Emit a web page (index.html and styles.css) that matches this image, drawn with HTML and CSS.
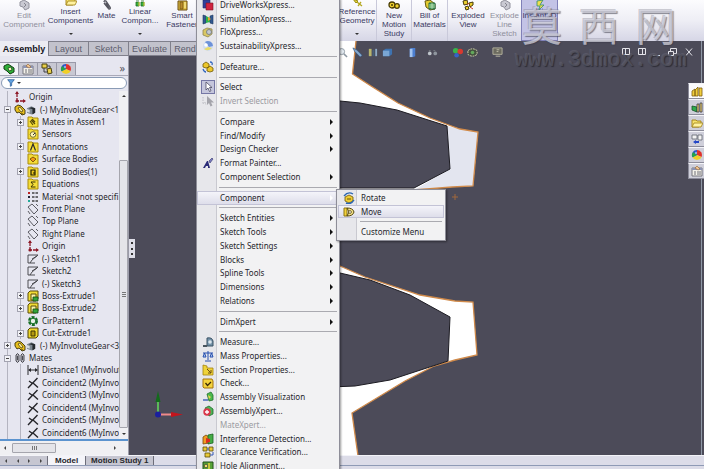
FILE: index.html
```
<!DOCTYPE html>
<html lang="en">
  <head>
    <meta charset="utf-8" />
    <title>Assembly</title>
    <meta name="viewport" content="width=device-width, initial-scale=1.0" />
    <link rel="stylesheet" href="styles.css">
  </head>
  <body>
    <!-- shared icons -->
    <svg class="sprite" aria-hidden="true">
      <symbol id="i-part" viewBox="0 0 12 12"><path d="M1 3l3-2 3 1 4 4v4l-3 1-3-3-2 1-2-3z" fill="#e8bf1d" stroke="#3b3208" stroke-width=".9" /><path d="M4 4l2-1 3 4-2 1zM7 9l2 1" fill="#fff3a0" stroke="#3b3208" stroke-width=".7" /></symbol>
      <symbol id="i-green-part" viewBox="0 0 12 12"><path d="M1 3l4-2 6 4v4l-4 2-3-3-3-2z" fill="#2fae38" stroke="#123d14" /><path d="M5 5l3-1 1 3-3 1z" fill="#f6f6c0" stroke="#123d14" stroke-width=".7" /></symbol>
      <symbol id="i-gray-part" viewBox="0 0 12 12"><path d="M2 3l4-2 5 3v5l-4 2-2-3-3-1z" fill="#c9c9d2" stroke="#92929d" /><path d="M6 4l2 2-2 2" fill="none" stroke="#85858f" /></symbol>
      <symbol id="i-cube" viewBox="0 0 12 12"><path d="M1 4l5-2 4 2v5l-4 2-5-2z" fill="#7d8791" /><path d="M3 4l4 1v6l3-2V4L6 3z" fill="#25292e" /><path d="M1 5l3 1v3L1 8z" fill="#d7dde2" /></symbol>
      <symbol id="i-origin" viewBox="0 0 12 12"><path d="M3 1v9h8" fill="none" stroke="#8e1a28" stroke-width="1.3" stroke-dasharray="5 1" /><path d="M1 3l2-3 2 3zM9 8l3 2-3 2z" fill="#8e1a28" /><circle cx="3" cy="10" r="1.6" fill="#8e1a28" /></symbol>
      <symbol id="i-folder" viewBox="0 0 12 12"><path d="M1 1h4l1 1h5v9H1z" fill="#f4dd38" stroke="#a98b0c" /></symbol>
      <symbol id="i-mates" viewBox="0 0 12 12"><use href="#i-folder" /><path d="M4 4l4 4M5 3l3 3M3 5l3 4" stroke="#54480a" stroke-width="1.2" /></symbol>
      <symbol id="i-sensor" viewBox="0 0 12 12"><use href="#i-folder" /><circle cx="6" cy="6.5" r="2.8" fill="#fff6b2" stroke="#57512c" stroke-width=".8" /><path d="M6 7l2-2" stroke="#333" /></symbol>
      <symbol id="i-note" viewBox="0 0 12 12"><use href="#i-folder" /><path d="M3.500 9.500L6 3l2.500 6.500" fill="none" stroke="#2c2c2c" stroke-width="1.200" /></symbol>
      <symbol id="i-surface" viewBox="0 0 12 12"><use href="#i-folder" /><path d="M3 6l3-2 3 2-3 3z" fill="#f39b18" stroke="#6a3e04" stroke-width=".8" /></symbol>
      <symbol id="i-solid" viewBox="0 0 12 12"><use href="#i-folder" /><path d="M4 4h4v5H4z" fill="#e9c51e" stroke="#211d04" stroke-width="1.200" /><path d="M6 7h2" stroke="#211d04" /></symbol>
      <symbol id="i-sigma" viewBox="0 0 12 12"><use href="#i-folder" /><path d="M8.500 4H4l2 2.500L4 9h4.500" fill="none" stroke="#3a3206" /></symbol>
      <symbol id="i-material" viewBox="0 0 12 12"><path d="M5 2h6M5 6h6M5 10h6" stroke="#444" stroke-width="1.300" stroke-dasharray="2.500 1" /><path d="M1 1h2v2H1z" fill="#b22" /><path d="M1 5h2v2H1z" fill="#223" /><path d="M1 9h2v2H1z" fill="#2a9" /></symbol>
      <symbol id="i-plane" viewBox="0 0 12 12"><path d="M1 4l4-3 6 6-4 4zM1 8l2 3M9 1l2 2" fill="none" stroke="#4c4c52" stroke-width=".9" /></symbol>
      <symbol id="i-sketch" viewBox="0 0 12 12"><path d="M1 2h10L5 7 3 10H1zM3 10h5M5 6l5-3" fill="none" stroke="#3d3d42" stroke-width=".9" /></symbol>
      <symbol id="i-extrude" viewBox="0 0 12 12"><path d="M1 3l2-2h8v8l-2 2H1z" fill="#f1dc35" stroke="#5b4d08" /><path d="M4 4h5v6H4z" fill="#f8f3a9" stroke="#5b4d08" /><path d="M6 7h5v4H6z" fill="#34a43a" stroke="#114915" stroke-width=".8" /></symbol>
      <symbol id="i-cut" viewBox="0 0 12 12"><path d="M1 3l2-2h8v8l-2 2H1z" fill="#efd82c" stroke="#4f4306" /><path d="M4 4h4v5H4z" fill="#b59a10" stroke="#3e3403" /></symbol>
      <symbol id="i-pattern" viewBox="0 0 12 12"><circle cx="6" cy="6" r="3.500" fill="none" stroke="#176f27" stroke-width="3" stroke-dasharray="2.700 1" /><circle cx="6" cy="6" r="2.800" fill="#e8f0e8" stroke="#176f27" /></symbol>
      <symbol id="i-clips" viewBox="0 0 12 12"><path d="M2 3q1.500-3 3 0v6q-1.500 3-3 0zM7 3q1.500-3 3 0v6q-1.500 3-3 0zM3.500 4v4M8.500 4v4" fill="#b8b8c0" stroke="#4c4c54" /></symbol>
      <symbol id="i-distance" viewBox="0 0 12 12"><path d="M1 1v10M11 1v10M2 6h8" stroke="#2a2a2e" fill="none" /><path d="M1 6l3-2v4zM11 6L8 4v4z" fill="#2a2a2e" /></symbol>
      <symbol id="i-coincident" viewBox="0 0 12 12"><path d="M10.500 1L1 11M6 6l5 4.500M2 4l3.500 2.500" fill="none" stroke="#25252a" stroke-width="1.400" /></symbol>
      <symbol id="i-props" viewBox="0 0 12 12"><path d="M1 3h10v8H1z" fill="#f3f1ea" stroke="#77777f" /><path d="M1 3h10v2H1z" fill="#8c93b4" /><path d="M3 7h2M6 7h4M3 9h2M6 9h4" stroke="#6f6f77" /><path d="M6 1l3 3-2 1-3-2z" fill="#f1c592" stroke="#8d6233" stroke-width=".600" /></symbol>
      <symbol id="i-config" viewBox="0 0 12 12"><path d="M1 1h5v4H1zM6 6l4-1 1 5-4 1z" fill="#ead04a" stroke="#4b420f" /><path d="M3 5v4h3M6 3h3v2" fill="none" stroke="#3f3f45" /></symbol>
      <symbol id="i-wheel" viewBox="0 0 12 12"><path d="M6 6V1a5 5 0 0 1 4.500 7z" fill="#e0312b" /><path d="M6 6l4.500 2.300A5 5 0 0 1 1.500 8.300z" fill="#f0cf28" /><path d="M6 6L1.500 8.300A5 5 0 0 1 6 1z" fill="#2b53c9" /><path d="M6 6L2 3a5 5 0 0 0-.5 5.300z" fill="#26a447" /><circle cx="5" cy="4" r="1.200" fill="#fff" opacity=".5" /></symbol>
      <symbol id="i-clip" viewBox="0 0 12 12"><path d="M3 3q0-2 2-1l4 6q1 2-1 2l-1-1-4-5M5 4l3 5" fill="#bcbcc4" stroke="#55555e" stroke-width="1.300" /></symbol>
      <symbol id="i-linear" viewBox="0 0 12 12"><path d="M2 2h3v3H2zM7 2h3v3H7zM2 7h3v4H2zM7 7h3v4H7z" fill="#39b13f" stroke="#1c6b22" stroke-width=".8" /><path d="M5 7v4M10 7v4" stroke="#e6cf3b" /></symbol>
      <symbol id="i-ruler" viewBox="0 0 12 12"><path d="M3 2l6-1-3 5h4l-5 5 1-4H3z" fill="#f0e04c" stroke="#2d8d6c" stroke-width=".8" /><path d="M2 10h8" stroke="#5a7fd0" stroke-dasharray="1 1" /></symbol>
      <symbol id="i-geom" viewBox="0 0 12 12"><path d="M2 4l5 2-2 2z" fill="#eede3a" stroke="#958612" /><path d="M6 7l5 4M7 11l3-4" stroke="#b5a821" stroke-width="1.300" /></symbol>
      <symbol id="i-gears" viewBox="0 0 12 12"><circle cx="4" cy="6" r="3" fill="#f0d12f" stroke="#473b04" stroke-width="1.300" /><circle cx="9" cy="7" r="2.300" fill="#f0d12f" stroke="#473b04" stroke-width="1.300" /><circle cx="4" cy="6" r="1" fill="#473b04" /></symbol>
      <symbol id="i-bom" viewBox="0 0 12 12"><path d="M1 2l5-1 5 4v5l-5 1-4-3z" fill="#e2cb2f" stroke="#665810" /><path d="M5 4h6v6H5z" fill="#55a85b" stroke="#256b46" /><path d="M5 6h6M5 8h6M8 4v6" stroke="#e1efe1" stroke-width=".6" /></symbol>
      <symbol id="i-smart" viewBox="0 0 12 12"><path d="M2 2h9v9H2z" fill="#e5c243" stroke="#6b4d13" /><path d="M4 3h3v7H4z" fill="#b98a2c" stroke="#6b4d13" stroke-width=".7" /><path d="M8 4h2M8 6h2M8 8h2" stroke="#fbf0ae" /></symbol>
      <symbol id="i-explode" viewBox="0 0 12 12"><path d="M1 2l4-1 1 4-4 1zM7 4l4-1v3L8 8zM3 8l3-1 1 3-3 1z" fill="#eccf2f" stroke="#463b08" /><path d="M5 6l2-2M8 8l3 2" stroke="#c63a25" /></symbol>
      <symbol id="i-pages" viewBox="0 0 12 12"><path d="M1 1h7v8H1z" fill="#2f3f9d" stroke="#222b66" stroke-width=".6" /><path d="M4 4h7v7H4z" fill="#cf2440" stroke="#7c1424" stroke-width=".6" /></symbol>
      <symbol id="i-sim" viewBox="0 0 12 12"><path d="M1 2l3 1v7l-3 1zM11 2L8 3v7l3 1z" fill="#315990" stroke="#203b5f" stroke-width=".6" /><path d="M4 3l4 2v4l-4 1z" fill="#2fb24b" /><path d="M6 4l3 2-3 2z" fill="#f0a12a" /></symbol>
      <symbol id="i-flo" viewBox="0 0 12 12"><path d="M1 4l4-2 5 1v5l-4 3-5-2z" fill="#d9c764" stroke="#8f8652" stroke-width=".8" /><circle cx="7" cy="6" r="2.500" fill="#c4c9cf" stroke="#6c7580" stroke-width=".8" /></symbol>
      <symbol id="i-sustain" viewBox="0 0 12 12"><circle cx="6" cy="6" r="5" fill="#cfdcf1" /><path d="M3 2a5 5 0 0 1 8 4L7 7z" fill="#6d92d8" /><path d="M2 9q4 3 8-1L6 7z" fill="#e9dc68" /><circle cx="4" cy="5" r="1.800" fill="#fff" /></symbol>
      <symbol id="i-defeature" viewBox="0 0 12 12"><path d="M1 3l3-2 3 2v3L4 7 1 6zM5 7l3-2 3 2v3l-3 1-3-1z" fill="#ecc62a" stroke="#725c08" stroke-width=".8" /><path d="M8 1q3 0 2 3M1 8q1 3 3 3" fill="none" stroke="#3166be" stroke-width="1.300" /></symbol>
      <symbol id="i-cursor" viewBox="0 0 12 12"><path d="M4 1v8l2-2 1.500 3.500 1.500-.7L7.500 6.500H10z" fill="#fff" stroke="#4a4a63" stroke-width=".8" /></symbol>
      <symbol id="i-invert" viewBox="0 0 12 12"><path d="M5 1v9l2-2 1.500 3.500 2-1L9 7.500h3z" fill="#a4a4ab" /><path d="M1 2v7l2-2 1 3" fill="none" stroke="#bdbdc4" stroke-dasharray="1.500 1" /></symbol>
      <symbol id="i-painter" viewBox="0 0 12 12"><path d="M1 11L5 4h1l2 7H6V9H4l-1 2z" fill="#2b2c78" /><path d="M7 4l3-3 1 1-3 4z" fill="#7a7cc0" stroke="#33346a" stroke-width=".6" /></symbol>
      <symbol id="i-measure" viewBox="0 0 12 12"><path d="M5 2q5-1 6 3v5H5z" fill="#7391a8" stroke="#3a5265" /><circle cx="8" cy="6" r="1.800" fill="#dbe5ec" /><path d="M1 9h4v2H1z" fill="#48545e" /></symbol>
      <symbol id="i-scale" viewBox="0 0 12 12"><path d="M6 1v9M3 11h6M1 3h10M2.500 3L1 7h3zM9.500 3L8 7h3z" fill="#b9cff2" stroke="#264fae" /></symbol>
      <symbol id="i-section" viewBox="0 0 12 12"><path d="M1 1l4 1v2h6v7H1z" fill="#efd33a" stroke="#a4840d" stroke-width=".8" /><path d="M5 5l4 4M9 6v3H6" fill="none" stroke="#6b4a12" /></symbol>
      <symbol id="i-check" viewBox="0 0 12 12"><path d="M1 2h9l1 2v7H2l-1-1z" fill="#f4d33d" stroke="#a5740d" /><path d="M3.500 6l2 2.500L9 5" fill="none" stroke="#3b2a05" stroke-width="1.300" /></symbol>
      <symbol id="i-visual" viewBox="0 0 12 12"><path d="M5 3l4-2 2 3v5l-4 1z" fill="#4bb94e" stroke="#22702a" stroke-width=".8" /><path d="M1 8h5v2H1z" fill="#6c86c4" /><path d="M6 4l3 2-2 2z" fill="#efd24a" /></symbol>
      <symbol id="i-asmx" viewBox="0 0 12 12"><path d="M3 3l4-2 4 3v5l-4 2z" fill="#4fb456" stroke="#1f6b2b" stroke-width=".8" /><circle cx="5" cy="7" r="3.700" fill="#d9364a" /><path d="M5 5v4M3 7h4" stroke="#fff" stroke-width="1.300" /></symbol>
      <symbol id="i-interf" viewBox="0 0 12 12"><path d="M1 4l3-2 3 2v6l-6 1z" fill="#f09c22" stroke="#7c4608" stroke-width=".8" /><path d="M6 2l5-1v9l-5 1z" fill="#44ac45" stroke="#1a6322" stroke-width=".8" /><path d="M4 5l4 1v3l-4 1z" fill="#dc2c22" /></symbol>
      <symbol id="i-clear" viewBox="0 0 12 12"><path d="M1 1h4v4H1zM7 1h4v4H7zM3 7h5v4H3z" fill="#e8c836" stroke="#5c4b0a" stroke-width=".8" /><path d="M5 3h2M8 9h3V6" fill="none" stroke="#3459b3" /></symbol>
      <symbol id="i-hole" viewBox="0 0 12 12"><path d="M1 2h10v9H1z" fill="#58a337" stroke="#22511a" /><circle cx="4" cy="6" r="1.800" fill="#f2e06a" stroke="#333" stroke-width=".7" /><path d="M7 3v7" stroke="#e9d23a" stroke-width="1.500" /></symbol>
      <symbol id="i-rotate" viewBox="0 0 12 12"><path d="M2 5l4-2 4 2v4l-4 2-4-2z" fill="#f0cd31" stroke="#6a560a" stroke-width=".8" /><path d="M1 4q4-5 9-2M11 8q-3 5-8 3" fill="none" stroke="#2b66b2" stroke-width="1.400" /><path d="M4 7h4" stroke="#6a560a" /></symbol>
      <symbol id="i-move" viewBox="0 0 12 12"><path d="M1 2h3v8H1z" fill="#f2d23c" stroke="#8d7411" /><path d="M4 2q6 0 7 4-1 4-7 4l2-4z" fill="#f6e58d" stroke="#544509" /><circle cx="7" cy="6" r="1.400" fill="#fff" stroke="#544509" stroke-width=".8" /></symbol>
      <symbol id="i-home" viewBox="0 0 12 12"><path d="M1 6l3-2v7H1zM4 5l3-3v9H4zM8 3h3v8H8z" fill="#f0ce3e" stroke="#7d5d0d" stroke-width=".8" /></symbol>
      <symbol id="i-library" viewBox="0 0 12 12"><path d="M1 5l5 1v5L1 9z" fill="#2ea94b" stroke="#155425" stroke-width=".8" /><path d="M6 3h2v8H6zM9 2h2v9H9z" fill="#efd36c" stroke="#3b3b4d" stroke-width=".8" /></symbol>
      <symbol id="i-open" viewBox="0 0 12 12"><path d="M1 3h4l1 1h4v2L8 10H1z" fill="#f6e26c" stroke="#a08015" stroke-width=".9" /><path d="M1 10l2-4h9l-2 4z" fill="#fff2a0" stroke="#a08015" stroke-width=".8" /></symbol>
      <symbol id="i-palette" viewBox="0 0 12 12"><path d="M1 2h5v4H1zM7 2h4v5H7z" fill="#f2f2f2" stroke="#5f6570" stroke-width=".8" /><path d="M2 9l3-2v1h3v2H5v1z" fill="#2346c7" /></symbol>
      <symbol id="i-funnel" viewBox="0 0 12 12"><path d="M1 1h10L7 6v4l-2 1V6z" fill="#63a5e4" stroke="#1d4f8d" /></symbol>
      <symbol id="i-lens" viewBox="0 0 12 12"><circle cx="5" cy="5" r="3.300" fill="#e5ecf2" stroke="#8d98a2" /><path d="M7.500 7.500L11 11" stroke="#8d98a2" stroke-width="1.600" /></symbol>
      <symbol id="i-pen" viewBox="0 0 12 12"><path d="M1 1l4 2 6 6-2 2-6-6z" fill="#86a9cf" stroke="#31557e" stroke-width=".7" /></symbol>
      <symbol id="i-cutview" viewBox="0 0 12 12"><path d="M2 2h3v8H2z" fill="#b8b56e" /><path d="M6 3h2v7H6z" fill="#47607a" /><path d="M9 2h2v8H9z" fill="#8fabc5" /></symbol>
      <symbol id="i-box" viewBox="0 0 12 12"><path d="M1 4l3-2h7v6l-3 2H1z" fill="#3e73b1" /><path d="M1 4h7v6H1z" fill="#7aa6d4" /></symbol>
      <symbol id="i-can" viewBox="0 0 12 12"><path d="M3 2l2-1h4v9l-2 1H3z" fill="#4b7ed0" /><path d="M3 2h3v9H3z" fill="#a2c3ef" /></symbol>
      <symbol id="i-glasses" viewBox="0 0 12 12"><circle cx="3" cy="7" r="2" fill="#bfc5cb" /><circle cx="9" cy="7" r="2" fill="#8f969e" /><path d="M2 4h2M7 4h2" stroke="#7b8188" /></symbol>
      <symbol id="i-rgb" viewBox="0 0 12 12"><circle cx="4" cy="4" r="3" fill="#38b449" /><circle cx="9" cy="5" r="3" fill="#d9392f" /><circle cx="5" cy="9" r="2.500" fill="#3563c8" /></symbol>
      <symbol id="i-scene" viewBox="0 0 12 12"><path d="M1 4q5-4 10 0v4q-5 4-10 0z" fill="#45513f" stroke="#dfe0b6" stroke-dasharray="2 1" /><circle cx="6" cy="6" r="2" fill="#63a95c" /></symbol>
      <symbol id="i-monitor" viewBox="0 0 12 12"><path d="M1 1h10v7H1z" fill="#6b6a5f" stroke="#b6b39f" /><path d="M4 10h5M5 3h3M5 5h2" stroke="#c2bfab" /></symbol>
    </svg>

    <header class="ribbon">
      <button class="tool w-edit off"><svg><use href="#i-gray-part" /></svg>Edit<br>Component</button>
      <button class="tool w-insert drop"><svg><use href="#i-open" /></svg>Insert<br>Components</button>
      <button class="tool w-mate"><svg><use href="#i-clip" /></svg>Mate</button>
      <button class="tool w-linear drop"><svg><use href="#i-linear" /></svg>Linear<br>Compon...</button>
      <button class="tool w-smart"><svg><use href="#i-smart" /></svg>Smart<br>Fastener</button>
      <div class="tool-space"></div>
      <button class="tool w-ref drop"><svg><use href="#i-geom" /></svg>Reference<br>Geometry</button>
      <button class="tool w-motion"><svg><use href="#i-gears" /></svg>New<br>Motion<br>Study</button>
      <button class="tool w-bom"><svg><use href="#i-bom" /></svg>Bill of<br>Materials</button>
      <button class="tool w-view"><svg><use href="#i-explode" /></svg>Exploded<br>View</button>
      <button class="tool w-line off"><svg><use href="#i-gray-part" /></svg>Explode<br>Line<br>Sketch</button>
      <button class="tool w-instant active"><svg><use href="#i-ruler" /></svg>Instant3D</button>
    </header>

    <main class="workspace">
      <nav class="tabs">
        <button class="tab current">Assembly</button>
        <button class="tab">Layout</button>
        <button class="tab">Sketch</button>
        <button class="tab wide">Evaluate</button>
        <button class="tab last">Rend</button>
      </nav>

      <aside class="panel">
        <div class="panel-tabs">
          <button class="panel-tab current" aria-label="Feature tree"><svg><use href="#i-green-part" /></svg></button>
          <button class="panel-tab" aria-label="Properties"><svg><use href="#i-props" /></svg></button>
          <button class="panel-tab" aria-label="Configurations"><svg><use href="#i-config" /></svg></button>
          <button class="panel-tab" aria-label="Appearances"><svg><use href="#i-wheel" /></svg></button>
          <span class="more">»</span>
        </div>
        <label class="filter">
          <svg><use href="#i-funnel" /></svg><i class="caret"></i>
          <input type="text" aria-label="Filter" />
        </label>
        <div class="tree-box">
          <ul class="tree">
            <li class="l1"><svg><use href="#i-origin" /></svg>Origin</li>
            <li class="l1 minus"><svg><use href="#i-part" /></svg><svg><use href="#i-cube" /></svg>(-) MyInvoluteGear&lt;1</li>
            <li class="l2 plus"><svg><use href="#i-mates" /></svg>Mates in Assem1</li>
            <li class="l2"><svg><use href="#i-sensor" /></svg>Sensors</li>
            <li class="l2 plus"><svg><use href="#i-note" /></svg>Annotations</li>
            <li class="l2"><svg><use href="#i-surface" /></svg>Surface Bodies</li>
            <li class="l2 plus"><svg><use href="#i-solid" /></svg>Solid Bodies(1)</li>
            <li class="l2"><svg><use href="#i-sigma" /></svg>Equations</li>
            <li class="l2"><svg><use href="#i-material" /></svg>Material &lt;not specifi</li>
            <li class="l2"><svg><use href="#i-plane" /></svg>Front Plane</li>
            <li class="l2"><svg><use href="#i-plane" /></svg>Top Plane</li>
            <li class="l2"><svg><use href="#i-plane" /></svg>Right Plane</li>
            <li class="l2"><svg><use href="#i-origin" /></svg>Origin</li>
            <li class="l2"><svg><use href="#i-sketch" /></svg>(-) Sketch1</li>
            <li class="l2"><svg><use href="#i-sketch" /></svg>Sketch2</li>
            <li class="l2"><svg><use href="#i-sketch" /></svg>(-) Sketch3</li>
            <li class="l2 plus"><svg><use href="#i-extrude" /></svg>Boss-Extrude1</li>
            <li class="l2 plus"><svg><use href="#i-extrude" /></svg>Boss-Extrude2</li>
            <li class="l2"><svg><use href="#i-pattern" /></svg>CirPattern1</li>
            <li class="l2 plus"><svg><use href="#i-cut" /></svg>Cut-Extrude1</li>
            <li class="l1 plus"><svg><use href="#i-part" /></svg><svg><use href="#i-cube" /></svg>(-) MyInvoluteGear&lt;3</li>
            <li class="l1 minus"><svg><use href="#i-clips" /></svg>Mates</li>
            <li class="l2"><svg><use href="#i-distance" /></svg>Distance1 (MyInvolut</li>
            <li class="l2"><svg><use href="#i-coincident" /></svg>Coincident2 (MyInvo</li>
            <li class="l2"><svg><use href="#i-coincident" /></svg>Coincident3 (MyInvo</li>
            <li class="l2"><svg><use href="#i-coincident" /></svg>Coincident4 (MyInvo</li>
            <li class="l2"><svg><use href="#i-coincident" /></svg>Coincident5 (MyInvo</li>
            <li class="l2"><svg><use href="#i-coincident" /></svg>Coincident6 (MyInvo</li>
          </ul>
          <div class="vscroll"><i class="up"></i><div class="vthumb"></div><i class="caret"></i></div>
        </div>
        <div class="hscroll"><i class="left"></i><div class="hthumb"></div><i class="right"></i></div>
      </aside>

      <section class="canvas">
        <!-- gear teeth and axis triad -->
        <svg class="model" viewBox="129 41 575 414" preserveAspectRatio="xMinYMin meet">
          <path d="M330 41H356L352.500 74 371 86 398 103 430 118 446 124 460 129 478 132 473 186 452 187 414 190H330z" fill="#fff" />
          <path d="M447 126L460 129 478 132 473 186 452 187 414 190 450 169z" fill="#e3e5ef" />
          <path d="M356 41L352.500 74 371 86 398 103 430 118 446 124 460 129 478 132 473 186 452 187 414 190" fill="none" stroke="#d08a4a" stroke-width="1.300" />
          <path d="M330 101L340 101 360 103 397 110 447 126 450 169 414 188H330z" fill="#4c4b59" stroke="#1c1b22" />
          <path d="M330 262L340 266 365 277 420 295 455 301 473 302 477 355 455 360 434 366 405 381 352 413 358 456H330z" fill="#fff" stroke="#d08a4a" stroke-width="1.300" />
          <path d="M330 271L340 273 370 280 410 295 450 317 448 361 390 380 355 386 330 387z" fill="#4c4b59" stroke="#1c1b22" />
          <path d="M452 197h6M455 194v6" stroke="#a0683c" />
          <path d="M158 414V400" stroke="#5cb85a" stroke-width="2" />
          <path d="M155.500 402L158 391l2.500 11z" fill="#136b1b" />
          <path d="M158 414.500H172" stroke="#ef8a8a" stroke-width="2" />
          <path d="M171 412l12 2.500-12 2.500z" fill="#c3141c" />
          <circle cx="158" cy="414.500" r="3" fill="#1a1f9e" />
        </svg>
        <div class="view-bar">
          <svg class="g1"><use href="#i-lens" /></svg>
          <svg class="g1"><use href="#i-pen" /></svg>
          <svg class="g1"><use href="#i-cutview" /></svg>
          <svg class="g3"><use href="#i-box" /></svg>
          <svg class="g2"><use href="#i-can" /></svg>
          <svg class="g3"><use href="#i-glasses" /></svg>
          <svg class="g1"><use href="#i-rgb" /></svg>
          <svg class="g3"><use href="#i-scene" /></svg>
          <svg class="g1"><use href="#i-monitor" /></svg>
          <svg class="window-buttons" viewBox="0 0 72 10" fill="none" stroke="#e4e4ea"><path d="M1.500 1.500h7v6h-7zM4.500 1.500v6M17.500 1.500h7v6h-7zM21.500 1.500v6M32 8.500h7M47.500 4.500h5v4h-5zM49.500 4V1.500h6v5H53M65 1.500l6 7M71 1.500l-6 7" /></svg>
        </div>
        <div class="splitter"><i></i><i></i><i></i></div>
        <div class="edge"></div>
        <div class="task-pane">
          <button class="current" aria-label="Resources"><svg><use href="#i-home" /></svg></button>
          <button aria-label="Design library"><svg><use href="#i-library" /></svg></button>
          <button aria-label="File explorer"><svg><use href="#i-open" /></svg></button>
          <button aria-label="View palette"><svg><use href="#i-palette" /></svg></button>
          <button aria-label="Appearances"><svg><use href="#i-wheel" /></svg></button>
          <button aria-label="Custom properties"><svg><use href="#i-props" /></svg></button>
        </div>
      </section>
    </main>

    <footer class="bottom">
      <div class="sheets">
        <div class="steps"><i class="left"></i><i class="left"></i><i class="right"></i><i class="right"></i></div>
        <button class="sheet current">Model</button>
        <button class="sheet">Motion Study 1</button>
      </div>
    </footer>

    <div class="watermark">
      <div class="mark-name"><span>莫</span><span>西</span><span>网</span></div>
      <div class="mark-url">www.3dmox.com</div>
    </div>

    <div class="menu tools-menu">
      <button class="item"><svg><use href="#i-pages" /></svg>DriveWorksXpress...</button>
      <button class="item"><svg><use href="#i-sim" /></svg>SimulationXpress...</button>
      <button class="item"><svg><use href="#i-flo" /></svg>FloXpress...</button>
      <button class="item"><svg><use href="#i-sustain" /></svg>SustainabilityXpress...</button>
      <div class="sep"></div>
      <button class="item"><svg><use href="#i-defeature" /></svg>Defeature...</button>
      <div class="sep"></div>
      <button class="item picked"><svg><use href="#i-cursor" /></svg>Select</button>
      <button class="item" disabled><svg><use href="#i-invert" /></svg>Invert Selection</button>
      <div class="sep"></div>
      <button class="item sub">Compare</button>
      <button class="item sub">Find/Modify</button>
      <button class="item sub">Design Checker</button>
      <button class="item"><svg><use href="#i-painter" /></svg>Format Painter...</button>
      <button class="item sub">Component Selection</button>
      <div class="sep"></div>
      <button class="item sub hot">Component</button>
      <div class="sep"></div>
      <button class="item sub">Sketch Entities</button>
      <button class="item sub">Sketch Tools</button>
      <button class="item sub">Sketch Settings</button>
      <button class="item sub">Blocks</button>
      <button class="item sub">Spline Tools</button>
      <button class="item sub">Dimensions</button>
      <button class="item sub">Relations</button>
      <div class="sep"></div>
      <button class="item sub">DimXpert</button>
      <div class="sep"></div>
      <button class="item"><svg><use href="#i-measure" /></svg>Measure...</button>
      <button class="item"><svg><use href="#i-scale" /></svg>Mass Properties...</button>
      <button class="item"><svg><use href="#i-section" /></svg>Section Properties...</button>
      <button class="item"><svg><use href="#i-check" /></svg>Check...</button>
      <button class="item"><svg><use href="#i-visual" /></svg>Assembly Visualization</button>
      <button class="item"><svg><use href="#i-asmx" /></svg>AssemblyXpert...</button>
      <button class="item" disabled>MateXpert...</button>
      <button class="item"><svg><use href="#i-interf" /></svg>Interference Detection...</button>
      <button class="item"><svg><use href="#i-clear" /></svg>Clearance Verification...</button>
      <button class="item"><svg><use href="#i-hole" /></svg>Hole Alignment...</button>
    </div>

    <div class="menu submenu">
      <button class="item"><svg><use href="#i-rotate" /></svg>Rotate</button>
      <button class="item hot"><svg><use href="#i-move" /></svg>Move</button>
      <div class="sep"></div>
      <button class="item">Customize Menu</button>
    </div>
  </body>
</html>
```
FILE: styles.css
```
*,
*::before,
*::after {
  box-sizing: border-box;
}

body {
  margin: 0;
  height: 100vh;
  display: flex;
  flex-direction: column;
  position: relative;
  overflow: hidden;
  background: #e3e3ee;
  color: #26262c;
  font-family: "Noto Sans", "Open Sans", sans-serif;
  font-size: 8px;
}

button {
  margin: 0;
  padding: 0;
  border: none;
  background: none;
  color: inherit;
  font: inherit;
}

svg {
  width: 12px;
  height: 12px;
  flex-shrink: 0;
}

.sprite {
  position: absolute;
  width: 0;
  height: 0;
}

/* small arrows */
.caret,
.up,
.left,
.right {
  width: 0;
  height: 0;
  border: 2px solid transparent;
}

.caret {
  border-top-color: #333;
  border-bottom: none;
}

.up {
  border-bottom-color: #333;
  border-top: none;
}

.left {
  border-right-color: #444;
  border-left: none;
}

.right {
  border-left-color: #444;
  border-right: none;
}

/* Ribbon */
.ribbon {
  height: 41px;
  flex-shrink: 0;
  display: flex;
  overflow: hidden;
  background: linear-gradient(#fcfcfe, #eeeef5 50%, #d6d6e6);
  font-family: "Liberation Sans", sans-serif;
  color: #3a3a63;
}

.tool {
  height: 41px;
  flex-shrink: 0;
  display: flex;
  flex-direction: column;
  align-items: center;
  text-align: center;
  white-space: nowrap;
  line-height: 9px;
}

.tool svg {
  margin-top: -1px;
}

.tool.drop svg {
  margin-top: -5px;
}

.tool.drop::after {
  content: "";
  width: 4px;
  margin-top: 8px;
  border: 2px solid transparent;
  border-top-color: #333;
  border-bottom: none;
}

.tool.off {
  color: #8f8f9c;
}

.tool.active {
  background: #c3c3e6;
  border: 1px solid #8080b8;
  border-top: none;
}

.w-edit {
  width: 48px;
}

.w-insert {
  width: 45px;
}

.w-mate {
  width: 27px;
}

.w-linear {
  width: 40px;
}

.w-smart {
  width: 44px;
}

.tool-space {
  width: 134px;
  flex-shrink: 0;
}

.w-ref {
  width: 38px;
}

.w-motion {
  width: 35px;
  border-left: 1px solid #c9c9da;
}

.w-bom {
  width: 37px;
  border-left: 1px solid #c9c9da;
  border-right: 1px solid #c9c9da;
}

.w-view {
  width: 40px;
}

.w-line {
  width: 33px;
}

.w-instant {
  width: 37px;
}

/* Workspace */
.workspace {
  flex: 1;
  min-height: 0;
  display: grid;
  grid-template-columns: 129px 1fr;
  grid-template-rows: 15px 1fr;
}

.tabs {
  grid-area: 1 / 1 / 2 / 3;
  justify-self: start;
  width: 196px;
  z-index: 1;
  display: flex;
  background: #d3d3df;
  font-family: "Liberation Sans", sans-serif;
  font-size: 9px;
}

.tab {
  width: 40px;
  flex-shrink: 0;
  border: 1px solid #80808c;
  border-left: none;
  background: #c2c2cc;
  color: #5d5d6c;
}

.tab.wide {
  width: 42px;
}

.tab.last {
  width: 25px;
  padding-left: 3px;
  border-right: none;
}

.tab.current {
  width: 49px;
  border-top: none;
  border-bottom: none;
  background: #ececf3;
  color: #16161c;
  font-weight: bold;
}

.panel {
  grid-area: 2 / 1;
  min-height: 0;
  display: flex;
  flex-direction: column;
  background: #e6e6f0;
  border-right: 1px solid #9b9ba8;
}

.panel-tabs {
  height: 20px;
  padding-top: 6px;
  display: flex;
  flex-shrink: 0;
  border-bottom: 1px solid #a9a9b8;
}

.panel-tab {
  width: 19px;
  display: flex;
  align-items: center;
  justify-content: center;
  border: 1px solid #9999a8;
  border-left: none;
  border-bottom: none;
  background: #c8c8d3;
}

.panel-tab.current {
  background: #f2f2f8;
}

.more {
  margin: 0 3px 0 auto;
  font-size: 11px;
  line-height: 11px;
  color: #55555f;
}

.filter {
  height: 12px;
  margin: 1px;
  padding-left: 5px;
  flex-shrink: 0;
  display: flex;
  align-items: center;
  gap: 2px;
  border: 1px solid #8a9bb5;
  border-radius: 6px;
  background: #fff;
}

.filter svg {
  width: 8px;
  height: 8px;
}

.filter input {
  flex: 1;
  min-width: 0;
  height: 8px;
  padding: 0;
  border: none;
  outline: none;
  background: none;
  font: inherit;
}

.tree-box {
  flex: 1;
  min-height: 0;
  padding-top: 1px;
  display: flex;
  border-bottom: 2px solid #5b93cf;
}

.tree {
  flex: 1;
  min-width: 0;
  margin: 0;
  padding: 0;
  list-style: none;
  display: flex;
  flex-direction: column;
  overflow: hidden;
  background: linear-gradient(90deg, transparent 7px, #b4b4c0 7px, #b4b4c0 8px, transparent 8px);
}

.tree li {
  flex: 1;
  min-height: 0;
  display: flex;
  align-items: center;
  gap: 3px;
  white-space: nowrap;
  line-height: 12px;
}

.tree li::before {
  content: "";
  width: 7px;
  height: 7px;
  flex-shrink: 0;
}

.l1 {
  padding-left: 4px;
}

.l2 {
  padding-left: 17px;
  background: linear-gradient(90deg, transparent 20px, #b4b4c0 20px, #b4b4c0 21px, transparent 21px);
}

.l1 svg + svg {
  width: 11px;
  margin-left: -3px;
}

.tree .plus::before,
.tree .minus::before {
  border: 1px solid #a3a3b0;
  background: linear-gradient(#444, #444) center / 3px 1px no-repeat #f2f2f7;
}

.tree .plus::before {
  background: linear-gradient(#444, #444) center / 3px 1px no-repeat, linear-gradient(#444, #444) center / 1px 3px no-repeat #f2f2f7;
}

.vscroll {
  width: 9px;
  padding: 4px 0;
  flex-shrink: 0;
  display: flex;
  flex-direction: column;
  align-items: center;
  background: #f0f0f3;
}

.vthumb {
  width: 9px;
  flex: 1;
  margin: 63px 0 5px;
  border: 1px solid #a5a5ad;
  border-radius: 1px;
  background: repeating-linear-gradient(#777 0 1px, transparent 1px 2px) center / 4px 5px no-repeat #e4e4e9;
}

.hscroll {
  height: 14px;
  padding: 2px 12px 2px 4px;
  display: flex;
  align-items: center;
  flex-shrink: 0;
  background: #f0f0f3;
}

.hthumb {
  width: 44px;
  height: 10px;
  margin: 0 auto 0 6px;
  border: 1px solid #a5a5ad;
  border-radius: 1px;
  background: repeating-linear-gradient(90deg, #777 0 1px, transparent 1px 2px) center / 5px 4px no-repeat #e4e4e9;
}

/* Graphics area */
.canvas {
  grid-area: 1 / 2 / 3 / 3;
  min-width: 0;
  position: relative;
  background: #4c4b59;
}

.model {
  position: absolute;
  inset: 0;
  width: 100%;
  height: 100%;
}

.view-bar {
  position: relative;
  height: 22px;
  padding: 0 11px 0 208px;
  display: flex;
  align-items: center;
}

.view-bar svg {
  width: 11px;
  height: 11px;
}

.view-bar .g1 {
  margin-right: 4px;
}

.view-bar .g2 {
  margin-right: 9px;
}

.view-bar .g3 {
  margin-right: 14px;
}

.view-bar .window-buttons {
  width: 72px;
  height: 10px;
  margin-left: auto;
}

.splitter {
  position: absolute;
  left: 0;
  top: 198px;
  width: 6px;
  height: 19px;
  display: flex;
  flex-direction: column;
  align-items: center;
  justify-content: space-evenly;
  background: #dedee8;
}

.splitter i {
  width: 2px;
  height: 2px;
  background: #333;
}

.edge {
  position: absolute;
  top: 0;
  bottom: 0;
  right: 0;
  width: 3px;
  border-left: 1px solid #8f98a6;
}

.task-pane {
  position: absolute;
  top: 42px;
  right: 0;
  width: 16px;
  display: flex;
  flex-direction: column;
}

.task-pane button {
  height: 16px;
  display: flex;
  align-items: center;
  justify-content: center;
  border: 1px solid #8c8c9a;
  border-right: none;
  border-top-color: #f4f4f8;
  background: #cfcfda;
}

.task-pane .current {
  background: #fbfbfd;
}

/* Bottom bar */
.bottom {
  height: 14px;
  flex-shrink: 0;
  background: #dcdce8;
  border-top: 1px solid #f3f3f8;
}

.sheets {
  height: 10px;
  display: flex;
  border-bottom: 1px solid #8e9ab5;
  font-family: "Liberation Sans", sans-serif;
}

.steps {
  width: 47px;
  display: flex;
  align-items: center;
  justify-content: space-around;
  background: #c6c6d1;
}

.sheet {
  padding: 0 5px;
  border-right: 1px solid #6d6d79;
  background: #c6c6d1;
  line-height: 8px;
  font-size: 8px;
  font-weight: bold;
}

.sheet.current {
  padding: 0 7px;
  border-left: 1px solid #6d6d79;
  background: #f4f4f9;
}

/* Watermark */
.watermark {
  position: absolute;
  top: 4px;
  right: 17px;
  text-align: right;
}

.mark-name {
  display: flex;
  justify-content: flex-end;
  gap: 17px;
  padding-right: 11px;
  color: rgba(222, 222, 232, 0.7);
  font-family: "Noto Sans CJK SC", sans-serif;
  font-size: 40px;
  line-height: 40px;
  text-shadow: 1px 1px 1px rgba(60, 60, 75, 0.6), -1px -1px 0 rgba(120, 120, 135, 0.35);
}

.mark-url {
  margin-top: 5px;
  color: rgba(84, 84, 96, 0.8);
  font-family: "Liberation Mono", monospace;
  font-size: 22px;
  line-height: 24px;
  text-shadow: 1px 1px 1px rgba(25, 25, 32, 0.6), -1px -1px 0 rgba(130, 130, 145, 0.25);
}

/* Menus */
.menu {
  position: absolute;
  display: flex;
  flex-direction: column;
  border: 1px solid #8e8e98;
  background: linear-gradient(90deg, #e7e7eb 19px, #c9c9d0 19px, #c9c9d0 20px, #f2f2f3 20px);
  box-shadow: 1px 1px 2px rgba(0, 0, 0, 0.4);
}

.tools-menu {
  top: -2px;
  bottom: -4px;
  left: 196px;
  width: 144px;
  border-top: none;
  border-bottom: none;
}

.item {
  flex: 2;
  min-height: 0;
  padding-left: 23px;
  display: flex;
  align-items: center;
  line-height: 12px;
  text-align: left;
  white-space: nowrap;
}

.item svg {
  margin-left: -18px;
  margin-right: 6px;
}

.item:disabled {
  color: #9b9ba1;
}

.item.picked svg {
  background: #c5c6dc;
  outline: 1px solid #7577a5;
}

.item.sub::after {
  content: "";
  margin: 0 6px 0 auto;
  border: 3px solid transparent;
  border-left-color: #111;
  border-right: none;
}

.item.hot {
  background: linear-gradient(#f6f6fb, #dcdce9);
  box-shadow: inset 0 0 0 1px #c3c3d6;
}

.item.sub.hot::after {
  border-left-color: #fff;
}

.sep {
  flex: 1;
  min-height: 0;
  margin-left: 22px;
  margin-right: 2px;
  background: linear-gradient(#aaaab0, #aaaab0) center / 100% 1px no-repeat;
}

.submenu {
  top: 189px;
  left: 336px;
  width: 110px;
  height: 52px;
  padding: 1px;
}
```
